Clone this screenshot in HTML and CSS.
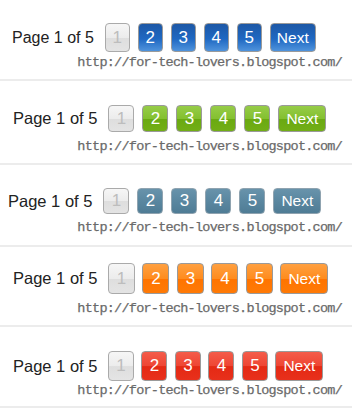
FILE: index.html
```html
<!DOCTYPE html>
<html lang="en">
<head>
    <meta charset="UTF-8">
    <meta name="viewport" content="width=device-width, initial-scale=1.0">
    <title>Pagination Styles</title>
    <link rel="stylesheet" href="styles.css">
</head>
<body>

    <div class="demo blue">
        <div class="pager">
            <span class="page-info">Page 1 of 5</span>
            <span class="page disabled">1</span>
            <a href="#" class="page">2</a>
            <a href="#" class="page">3</a>
            <a href="#" class="page">4</a>
            <a href="#" class="page">5</a>
            <a href="#" class="page next">Next</a>
        </div>
        <div class="credit">http://for-tech-lovers.blogspot.com/</div>
    </div>

    <div class="demo green">
        <div class="pager">
            <span class="page-info">Page 1 of 5</span>
            <span class="page disabled">1</span>
            <a href="#" class="page">2</a>
            <a href="#" class="page">3</a>
            <a href="#" class="page">4</a>
            <a href="#" class="page">5</a>
            <a href="#" class="page next">Next</a>
        </div>
        <div class="credit">http://for-tech-lovers.blogspot.com/</div>
    </div>

    <div class="demo steel">
        <div class="pager">
            <span class="page-info">Page 1 of 5</span>
            <span class="page disabled">1</span>
            <a href="#" class="page">2</a>
            <a href="#" class="page">3</a>
            <a href="#" class="page">4</a>
            <a href="#" class="page">5</a>
            <a href="#" class="page next">Next</a>
        </div>
        <div class="credit">http://for-tech-lovers.blogspot.com/</div>
    </div>

    <div class="demo orange">
        <div class="pager">
            <span class="page-info">Page 1 of 5</span>
            <span class="page disabled">1</span>
            <a href="#" class="page">2</a>
            <a href="#" class="page">3</a>
            <a href="#" class="page">4</a>
            <a href="#" class="page">5</a>
            <a href="#" class="page next">Next</a>
        </div>
        <div class="credit">http://for-tech-lovers.blogspot.com/</div>
    </div>

    <div class="demo red">
        <div class="pager">
            <span class="page-info">Page 1 of 5</span>
            <span class="page disabled">1</span>
            <a href="#" class="page">2</a>
            <a href="#" class="page">3</a>
            <a href="#" class="page">4</a>
            <a href="#" class="page">5</a>
            <a href="#" class="page next">Next</a>
        </div>
        <div class="credit">http://for-tech-lovers.blogspot.com/</div>
    </div>

</body>
</html>
```

FILE: styles.css
```css
body {
    margin: 0;
    font-family: "Liberation Sans", Arial, sans-serif;
    background-color: #fff;
    color: #222;
}
.demo {
    border-bottom: 2px solid #ececec;
    padding: 23px 0 8px 0;
}
.pager {
    display: flex;
    align-items: center;
    gap: 8px;
    padding-left: 12px;
}
.page-info {
    font-size: 16px;
    margin-right: 3px; /* 8px gap + 3 */
    white-space: nowrap;
}
.page {
    box-sizing: border-box;
    display: inline-flex;
    justify-content: center;
    align-items: center;
    width: 25px;
    height: 29px;
    border: 1px solid #9a9a9a;
    border-radius: 4px;
    color: #fff;
    font-size: 17px;
    text-decoration: none;
}
.page.next {
    width: auto;
    padding: 0 6px;
    font-size: 15.5px;
}
.credit {
    font-family: "Liberation Mono", "Courier New", monospace;
    font-size: 13.5px;
    letter-spacing: -0.75px;
    line-height: 16px;
    color: #6a6a6a;
    -webkit-text-stroke: 0.25px #6a6a6a; /* courier is too thin */
    text-align: right;
    padding-right: 10px;
    margin-top: 3px;
    white-space: nowrap;
}

/* blue */
.blue .page {
    background: linear-gradient(#1d58a6, #1f68c2 55%, #4f93dc);
}

/* green */
.green {
    padding: 24px 0 8px 0;
}
.green .pager {
    padding-left: 13px;
}
.green .page-info,
.steel .page-info,
.orange .page-info,
.red .page-info {
    font-size: 16.5px;
}
.green .page,
.steel .page,
.red .page {
    width: 26px;
    height: 27px;
}
.green .page {
    background: linear-gradient(#96cc48, #84c030 50%, #6aa912 52%, #72ae16);
}
.green .credit {
    margin-top: 7px;
}

/* steel */
.steel {
    padding: 23px 0 9px 0;
}
.steel .pager {
    padding-left: 8px;
}
.steel .page {
    height: 26px;
    border-color: #8fa3b0;
    background: linear-gradient(#6893ab, #5a87a0 50%, #4f7c95);
}
.steel .credit {
    margin-top: 6px;
}

/* orange */
.orange {
    padding: 16px 0 8px 0;
}
.orange .pager {
    padding-left: 13px;
    gap: 7.5px;
}
.orange .page {
    width: 27px;
    height: 31px;
    background: linear-gradient(#ffa040, #ff8c1e 50%, #ff7400 52%, #ff7a06);
}
.orange .credit {
    margin-top: 7px;
}

/* red */
.red {
    padding: 24px 0 7px 0;
}
.red .pager {
    padding-left: 13px;
    gap: 7.5px;
}
.red .page {
    height: 30px;
    background: linear-gradient(#f45c4a, #ee4634 50%, #e42a14 52%, #e8301c);
}
.red .credit {
    margin-top: 2px;
}

.demo .page.next {
    width: auto;
    padding: 0 7px;
}
.blue .page.next {
    padding: 0 6px;
}
.demo .page.disabled {
    color: #bdbdbd;
    border-color: #aaa;
    background: linear-gradient(#f6f6f6, #ececec 50%, #dedede 52%, #e4e4e4);
}
```
